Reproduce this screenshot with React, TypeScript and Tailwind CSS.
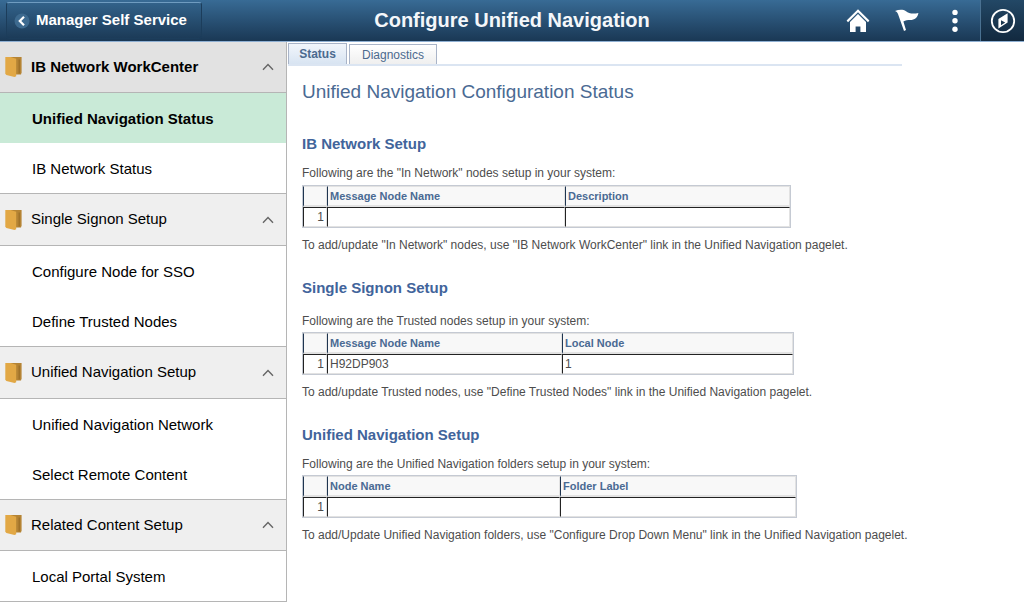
import { clsx } from "clsx"

type NavGroup = {
    title: string
    items: string[]
}

type Grid = {
    title: string
    intro: string
    note: string
    columns: [string, string]
    row: [string, string]
    tableWidth: string
    firstColumn: string
    introGap: string
    tableGap: string
}

const groups: NavGroup[] = [
    { title: "IB Network WorkCenter", items: ["Unified Navigation Status", "IB Network Status"] },
    { title: "Single Signon Setup", items: ["Configure Node for SSO", "Define Trusted Nodes"] },
    { title: "Unified Navigation Setup", items: ["Unified Navigation Network", "Select Remote Content"] },
    { title: "Related Content Setup", items: ["Local Portal System"] },
]

const grids: Grid[] = [
    {
        title: "IB Network Setup",
        intro: 'Following are the "In Network" nodes setup in your system:',
        note: 'To add/update "In Network" nodes, use "IB Network WorkCenter" link in the Unified Navigation pagelet.',
        columns: ["Message Node Name", "Description"],
        row: ["", ""],
        tableWidth: "w-[489px]",
        firstColumn: "w-[238px]",
        introGap: "mt-[11px]",
        tableGap: "mt-1",
    },
    {
        title: "Single Signon Setup",
        intro: "Following are the Trusted nodes setup in your system:",
        note: 'To add/update Trusted nodes, use "Define Trusted Nodes" link in the Unified Navigation pagelet.',
        columns: ["Message Node Name", "Local Node"],
        row: ["H92DP903", "1"],
        tableWidth: "w-[492px]",
        firstColumn: "w-[235px]",
        introGap: "mt-[15px]",
        tableGap: "mt-[3px]",
    },
    {
        title: "Unified Navigation Setup",
        intro: "Following are the Unified Navigation folders setup in your system:",
        note: 'To add/Update Unified Navigation folders, use "Configure Drop Down Menu" link in the Unified Navigation pagelet.',
        columns: ["Node Name", "Folder Label"],
        row: ["", ""],
        tableWidth: "w-[495px]",
        firstColumn: "w-[233px]",
        introGap: "mt-[11px]",
        tableGap: "mt-[3px]",
    },
]

function BackIcon() {
    return (
        <svg width="16" height="16" viewBox="0 0 16 16" fill="none">
            <circle cx="8" cy="8" r="7.5" fill="#3d6a8f" />
            <path d="M10 3.8 5.8 8l4.2 4.2" stroke="#fff" strokeWidth="2.2" />
        </svg>
    )
}

function HomeIcon() {
    return (
        <svg width="24" height="24" viewBox="0 0 24 24" fill="#fff">
            <path d="M12 0.2 0.6 11.6 2 13.2 12 3.3l10 9.9 1.4-1.6z" />
            <path d="M12 5 4 12.9V23h5.6V17.6h4.8V23H20V12.9z" />
        </svg>
    )
}

function FlagIcon() {
    return (
        <svg width="24" height="24" viewBox="0 0 24 24" fill="#fff">
            <path d="M0 2.1C3.6 0.6 8 0.2 11 2.2c2.6 1.9 6.4 3.2 12.4 1.7-.6 4.4-3.8 7-8.2 7.1-2.6 0-4.7.2-6.8 1.5L11 21l-2 1L3 5C2.4 3.6 1.4 2.6 0 2.1z" />
        </svg>
    )
}

function DotsIcon() {
    return (
        <svg width="8" height="24" viewBox="0 0 8 24" fill="#fff">
            <circle cx="4" cy="3.4" r="2.7" />
            <circle cx="4" cy="11.8" r="2.7" />
            <circle cx="4" cy="20.2" r="2.7" />
        </svg>
    )
}

function CompassIcon() {
    return (
        <svg width="26" height="26" viewBox="0 0 26 26" fill="none">
            <circle cx="13" cy="13" r="11.2" stroke="#fff" strokeWidth="1.8" />
            <path fillRule="evenodd" fill="#fff" d="M17.6 5.2V14.6L8.4 20.6V11zM11 12.2v5l4.2-2.6z" />
        </svg>
    )
}

function FolderIcon() {
    return (
        <svg width="17" height="20" viewBox="0 0 17 20">
            <path d="M5 0H16.6V15.5L16 17.5H5z" fill="#b58434" />
            <path d="M13.6 2.5H14.8V16.5H13.6z" fill="#9a6e28" />
            <path d="M0.3 0H5.5L11.2 1.8V19.3L9.5 20 1.4 18 0.3 16.8z" fill="#e2a845" />
        </svg>
    )
}

function ChevronUp() {
    return (
        <svg width="12" height="8" viewBox="0 0 12 8" fill="none">
            <path d="M1 6.8 6 1.6l5 5.2" stroke="#666" strokeWidth="1.4" />
        </svg>
    )
}

function TopBar() {
    return (
        <header className="relative flex h-[42px] items-center justify-between border-b border-[#8fb0d3] bg-linear-to-b from-[#386b95] to-[#1a3855]">
            <button className="ml-1.5 flex h-[37px] w-[196px] items-center gap-1.5 rounded-[3px] border border-[#1c3d5b] border-t-[#6f9cc0] bg-linear-to-b from-[#32628a] to-[#1c3b58] pl-[7px] text-[15px] font-bold whitespace-nowrap text-white">
                <BackIcon />
                Manager Self Service
            </button>

            <h1 className="absolute inset-x-0 top-2 mx-auto w-fit text-xl leading-6 font-bold text-[#f4f7fa]">
                Configure Unified Navigation
            </h1>

            <div className="flex h-full items-center">
                <button aria-label="Home" className="mr-[25px]"><HomeIcon /></button>
                <button aria-label="Notifications" className="mr-8"><FlagIcon /></button>
                <button aria-label="Actions" className="mr-[21px]"><DotsIcon /></button>
                <button
                    aria-label="NavBar"
                    className="flex h-full w-11 items-center justify-center border-l border-[#4a7191] bg-linear-to-b from-[#234866] to-[#12293f]"
                >
                    <CompassIcon />
                </button>
            </div>
        </header>
    )
}

function Sidebar() {
    return (
        <nav className="w-[287px] shrink-0 self-start border-r border-[#b5b5b5] text-[15px] text-black">
            {groups.map((group, index) => (
                <section key={group.title} className="group border-b border-[#b5b5b5]">
                    <button
                        className={clsx(
                            "flex h-[52px] w-full items-center border-b border-[#b5b5b5] pr-3 pl-[5px] text-left group-first:h-[51px] group-last:h-[51px]",
                            index === 0 ? "bg-[#e2e2e2] font-bold" : "bg-[#efefef]"
                        )}
                    >
                        <FolderIcon />
                        <span className="ml-[9px] flex-1">{group.title}</span>
                        <ChevronUp />
                    </button>
                    <ul>
                        {group.items.map((item, i) => (
                            <li key={item}>
                                <a
                                    href="#"
                                    className={clsx(
                                        "flex h-[50px] items-center pt-0.5 pl-8",
                                        index === 0 && i === 0 && "bg-[#c9ead7] font-bold"
                                    )}
                                >
                                    {item}
                                </a>
                            </li>
                        ))}
                    </ul>
                </section>
            ))}
        </nav>
    )
}

function Tabs() {
    return (
        <div className="ml-px flex w-[614px] max-w-full items-end gap-0.5 border-b-2 border-[#dbe5f2] pt-px text-xs text-[#4c6a8f]">
            <button className="h-[21px] w-[59px] border border-b-0 border-[#a9b4c8] bg-linear-to-b from-[#f2f6fc] to-[#d8e4f2] font-bold">
                Status
            </button>
            <button className="h-5 w-[88px] border border-b-0 border-[#a9b4c8] bg-linear-to-b from-white to-[#efefef]">
                Diagnostics
            </button>
        </div>
    )
}

function GridSection({ grid }: { grid: Grid }) {
    const th = "h-[21px] border-t border-r border-b-2 border-l border-[#e2e2e2] border-l-[#1f3550] bg-[#f8f8f8] pl-0.5 text-left text-[11px] leading-none font-bold text-[#4a6a93]"
    const td = "h-5 border border-[#e2e2e2] border-t-[#222] border-l-[#222] px-0.5 leading-none"

    return (
        <section className="mb-[25px]">
            <h3 className="text-[15px] leading-5 font-bold text-[#41649b]">{grid.title}</h3>
            <p className={clsx("leading-4", grid.introGap)}>{grid.intro}</p>
            <table
                className={clsx(
                    "table-fixed border-separate border-spacing-0 border border-[#c5cad3]",
                    grid.tableWidth,
                    grid.tableGap
                )}
            >
                <thead>
                    <tr>
                        <th className={clsx(th, "w-6")} aria-label="Row" />
                        <th className={clsx(th, grid.firstColumn)}>{grid.columns[0]}</th>
                        <th className={th}>{grid.columns[1]}</th>
                    </tr>
                </thead>
                <tbody>
                    <tr>
                        <td className={clsx(td, "text-right")}>1</td>
                        <td className={td}>{grid.row[0]}</td>
                        <td className={td}>{grid.row[1]}</td>
                    </tr>
                </tbody>
            </table>
            <p className="mt-[9px] leading-4">{grid.note}</p>
        </section>
    )
}

export default function App() {
    return (
        <div className="bg-white font-['Liberation_Sans',Arial,sans-serif]">
            <TopBar />

            <div className="flex">
                <Sidebar />

                <main className="min-w-0 flex-1">
                    <Tabs />
                    <div className="pt-[14px] pl-[15px] text-xs text-[#4d4d4d]">
                        <h2 className="mb-[30px] text-[19px] leading-6 text-[#4a6a93]">
                            Unified Navigation Configuration Status
                        </h2>
                        {grids.map(grid => (
                            <GridSection key={grid.title} grid={grid} />
                        ))}
                    </div>
                </main>
            </div>
        </div>
    )
}
